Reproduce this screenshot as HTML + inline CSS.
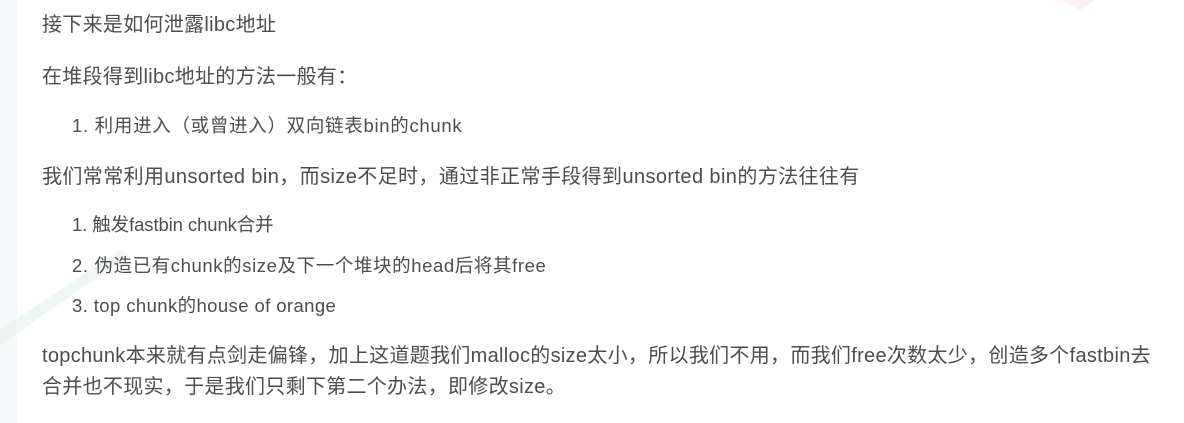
<!DOCTYPE html>
<html><head><meta charset="utf-8"><style>
html,body{margin:0;padding:0;width:1184px;height:423px;overflow:hidden;background:#fff}
.strip{position:absolute;left:0;top:0;width:17px;height:423px;background:#f5f6f7}
.t{position:absolute;left:42px;font-family:"Liberation Sans","Noto Sans CJK SC",sans-serif;font-size:20px;color:#4d4d4d;white-space:nowrap;line-height:24px;letter-spacing:0.3px}
.li{left:72px;font-size:18.5px;letter-spacing:0.4px}
</style></head><body>
<div class="strip"></div>
<svg style="position:absolute;left:0;top:0" width="1184" height="423"><path d="M0 330 L120 250 L130 255 L0 345 Z" fill="#e6f5ee" opacity="0.7"/><path d="M1060 0 L1080 10 L1095 0 Z" fill="#fdf0ee"/></svg>
<div class="t" style="top:13px">接下来是如何泄露libc地址</div>
<div class="t" style="top:65px">在堆段得到libc地址的方法一般有：</div>
<div class="t li" style="top:114px;letter-spacing:0.7px">1. 利用进入（或曾进入）双向链表bin的chunk</div>
<div class="t" style="top:165px;letter-spacing:0.4px">我们常常利用unsorted bin，而size不足时，通过非正常手段得到unsorted bin的方法往往有</div>
<div class="t li" style="top:213px;letter-spacing:-0.1px">1. 触发fastbin chunk合并</div>
<div class="t li" style="top:254px;letter-spacing:0.6px">2. 伪造已有chunk的size及下一个堆块的head后将其free</div>
<div class="t li" style="top:294px">3. top chunk的house of orange</div>
<div class="t" style="top:344px">topchunk本来就有点剑走偏锋，加上这道题我们malloc的size太小，所以我们不用，而我们free次数太少，创造多个fastbin去</div>
<div class="t" style="top:375px">合并也不现实，于是我们只剩下第二个办法，即修改size。</div>
</body></html>
